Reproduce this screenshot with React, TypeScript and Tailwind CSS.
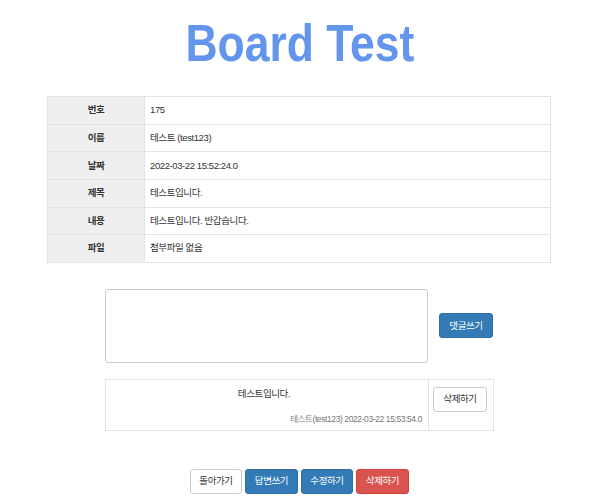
import React from "react";

const rows: [string, string][] = [
  ["번호", "175"],
  ["이름", "테스트 (test123)"],
  ["날짜", "2022-03-22 15:52:24.0"],
  ["제목", "테스트입니다."],
  ["내용", "테스트입니다. 반갑습니다."],
  ["파일", "첨부파일 없음"],
];

const font = { fontFamily: '"Liberation Sans", "Noto Sans CJK KR", sans-serif' };

export default function App() {
  return (
    <div className="w-[600px] h-[500px] bg-white text-[#333] overflow-hidden tracking-[-0.4px]" style={font}>
      <div className="mt-[17px] flex justify-center">
        <h1 className="inline-block scale-x-[0.855] text-[52px] leading-none font-bold text-[#6495ed] tracking-normal">Board Test</h1>
      </div>

      <table className="mt-[27px] ml-[47px] w-[504px] border-collapse text-[9.5px]">
        <tbody>
          {rows.map(([k, v]) => (
            <tr key={k} className="h-[27.67px]">
              <th className="w-[97px] border border-[#e3e3e3] bg-[#efefef] text-center font-bold p-0">{k}</th>
              <td className="border border-[#e3e3e3] pl-[5px] p-0 text-left">{v}</td>
            </tr>
          ))}
        </tbody>
      </table>

      <div className="mt-[26px] ml-[105px] w-[388px] flex items-center gap-[11px]">
        <textarea className="w-[323px] h-[74px] border border-[#ccc] rounded-[3px] resize-none outline-none" />
        <button className="w-[54px] h-[25px] rounded-[3px] bg-[#337ab7] border border-[#2e6da4] text-white text-[9.5px]">댓글쓰기</button>
      </div>

      <div className="mt-[16px] ml-[105px] w-[389px] h-[52px] flex border border-[#e3e3e3]">
        <div className="w-[323px] flex flex-col border-r border-[#e3e3e3] pr-[6px]">
          <div className="mt-[6px] text-center text-[9.5px] leading-[16px]">테스트입니다.</div>
          <div className="mt-auto mb-[5px] text-right text-[8.5px] leading-[12px] text-[#777]">테스트(test123) 2022-03-22 15:53:54.0</div>
        </div>
        <div className="flex-1 pt-[5px] pl-[4px]">
          <button className="w-[54px] h-[25px] rounded-[3px] bg-white border border-[#ccc] text-[#333] text-[9.5px]">삭제하기</button>
        </div>
      </div>

      <div className="mt-[38px] flex justify-center gap-[3px] pr-[1px]">
        <button className="w-[52px] h-[25px] rounded-[3px] bg-white border border-[#ccc] text-[#333] text-[9.5px]">돌아가기</button>
        <button className="w-[53px] h-[25px] rounded-[3px] bg-[#337ab7] border border-[#2e6da4] text-white text-[9.5px]">답변쓰기</button>
        <button className="w-[52px] h-[25px] rounded-[3px] bg-[#337ab7] border border-[#2e6da4] text-white text-[9.5px]">수정하기</button>
        <button className="w-[53px] h-[25px] rounded-[3px] bg-[#d9534f] border border-[#d43f3a] text-white text-[9.5px]">삭제하기</button>
      </div>
    </div>
  );
}
